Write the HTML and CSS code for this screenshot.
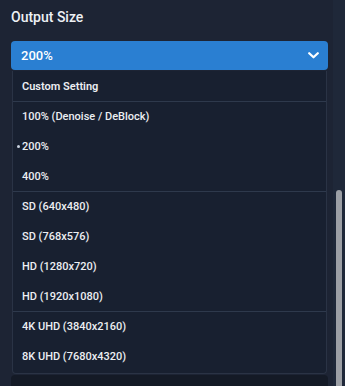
FILE: index.html
```html
<!DOCTYPE html>
<html>
<head>
<meta charset="utf-8">
<link rel="stylesheet" href="styles.css">
</head>
<body>
<div class="page">
  <div class="main">
    <div class="title">Output Size</div>
    <div class="field">
      <div class="select">
        <span class="value">200%</span>
        <svg class="chev" width="11" height="7" viewBox="0 0 11 7"><path d="M1.2 1.2 L5.5 5.3 L9.8 1.2" fill="none" stroke="#ffffff" stroke-width="2.2" stroke-linecap="round" stroke-linejoin="round"/></svg>
      </div>
      <div class="menu">
        <div class="item strong">Custom Setting</div>
        <div class="item sep">100% (Denoise / DeBlock)</div>
        <div class="item"><span class="dot"></span>200%</div>
        <div class="item">400%</div>
        <div class="item sep">SD (640x480)</div>
        <div class="item">SD (768x576)</div>
        <div class="item">HD (1280x720)</div>
        <div class="item">HD (1920x1080)</div>
        <div class="item sep">4K UHD (3840x2160)</div>
        <div class="item">8K UHD (7680x4320)</div>
      </div>
    </div>
    <div class="under"></div>
    <div class="input"></div>
  </div>
  <div class="scroll">
    <div class="thumb"></div>
  </div>
</div>
</body>
</html>
```

FILE: styles.css
```css
html, body {
  margin: 0;
  padding: 0;
  background: #1d2434;
}
body {
  font-family: Roboto, "Liberation Sans", sans-serif;
  color: #e8ebf0;
}
.page {
  display: flex;
  height: 386px;
  overflow: hidden;
}
.main {
  flex: 1;
  padding: 9px 5px 0 11px;
}
.title {
  font-size: 14px;
  font-weight: 500;
  line-height: 16px;
  color: #eef1f5;
}
.field {
  position: relative;
  margin-top: 16px;
}
.select {
  height: 29px;
  box-sizing: border-box;
  background: #2a7fd2;
  border-radius: 4px;
  display: flex;
  align-items: center;
  justify-content: space-between;
  padding: 0 9px 0 10px;
}
.value {
  font-size: 13px;
  font-weight: 500;
  color: #ffffff;
  line-height: 15px;
}
.chev {
  display: block;
}
.menu {
  position: absolute;
  top: 30px;
  left: 1px;
  right: 1px;
  background: #182030;
  border: 1px solid #2a3345;
  border-top: none;
  border-radius: 0 0 4px 4px;
  padding-bottom: 2px;
  z-index: 2;
}
.item {
  height: 30px;
  box-sizing: border-box;
  display: flex;
  align-items: center;
  padding-left: 9px;
  font-size: 11px;
  font-weight: 500;
  color: #eceef2;
}
.item.strong {
  font-weight: 600;
}
.item.sep {
  border-top: 1px solid #2e394c;
}
.dot {
  display: inline-block;
  width: 3px;
  height: 3px;
  border-radius: 50%;
  background: #c8d2df;
  margin-left: -5px;
  margin-right: 2px;
}
.under {
  height: 305px;
}
.input {
  height: 40px;
  background: #141a26;
  border-radius: 4px;
}
.scroll {
  width: 12px;
  background: #1f2839;
  padding-top: 190px;
  box-sizing: border-box;
}
.thumb {
  margin-left: 3px;
  width: 6px;
  height: 220px;
  background: #9c9fa5;
  border-radius: 3px 3px 0 0;
}
```
